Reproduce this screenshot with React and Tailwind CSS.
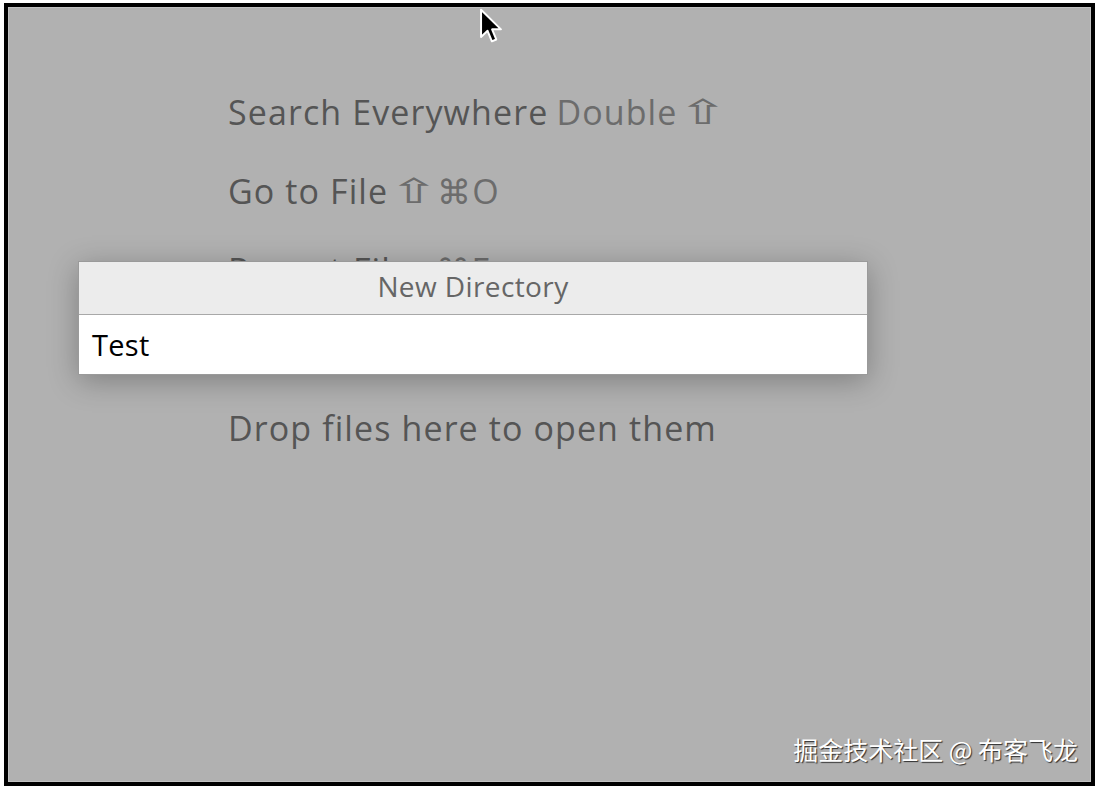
import React from 'react';

const rows = [
  { main: 'Search Everywhere', key: 'Double', arrow: true },
  { main: 'Go to File', key: '⌘O', arrowFirst: true },
  { main: 'Recent Files', key: '⌘E' },
  { main: 'Navigation Bar', key: '⌘↑' },
  { main: 'Drop files here to open them', key: '' },
];

const Shift = ({ className }) => (
  <span className={'inline-block w-[28px] text-center ' + className} style={{ fontFamily: '"DejaVu Sans", sans-serif' }}>
    <span className="inline-block scale-x-[1.8]">⇧</span>
  </span>
);

const Cursor = () => (
  <svg width="24" height="38" viewBox="0 0 13 21" className="absolute left-[470px] top-[0px]">
    <path
      d="M1 1 L1 16 L4.6 12.6 L7 18.4 L9.4 17.4 L7.1 11.8 L12 11.8 Z"
      fill="#000"
      stroke="#fff"
      strokeWidth="1.1"
      strokeLinejoin="round"
    />
  </svg>
);

export default function App() {
  return (
    <div className="w-[1100px] h-[790px] bg-white pt-[3px] pl-[4px]">
      <div className="relative w-[1091px] h-[783px] border-[4px] border-black bg-[#b1b1b1]">
        <div className="w-full h-full border border-[#c2c2c2] overflow-hidden relative" style={{ fontFamily: '"Open Sans", "Liberation Sans", sans-serif' }}>
          {/* welcome screen hints */}
          <div className="flex flex-col pl-[219px] pt-[65px]">
            {rows.map((r) => (
              <div key={r.main} className="h-[79px] flex items-center gap-[8px] text-[34px] tracking-[1.1px] text-[#555555]">
                <span>{r.main}</span>
                {r.key && (
                  <span className="text-[#6c6c6c] flex items-center">
                    {r.arrowFirst && <Shift className="ml-[4px] mr-[9px]" />}
                    {r.key}
                    {r.arrow && <Shift className="ml-[12px]" />}
                  </span>
                )}
              </div>
            ))}
          </div>

          <Cursor />

          {/* new directory popup */}
          <div className="absolute left-[69px] top-[253px] w-[790px] border border-[#9a9a9a] bg-white shadow-[0_6px_28px_rgba(0,0,0,0.28)]">
            <div className="h-[53px] bg-[#ececec] flex items-center justify-center pb-[4px] text-[28px] tracking-[0.4px] text-[#666666] border-b border-[#a8a8a8]">
              New Directory
            </div>
            <div className="h-[59px] flex items-center pl-[13px] text-[29px] tracking-[0.3px] text-black">
              Test
            </div>
          </div>

          {/* watermark */}
          <div
            className="absolute right-[12px] bottom-[13px] text-[25px] text-white [text-shadow:1px_1px_1px_rgba(0,0,0,0.75)]"
            style={{ fontFamily: '"Noto Sans CJK SC", "Liberation Sans", sans-serif' }}
          >
            掘金技术社区 @ 布客飞龙
          </div>
        </div>
      </div>
    </div>
  );
}
